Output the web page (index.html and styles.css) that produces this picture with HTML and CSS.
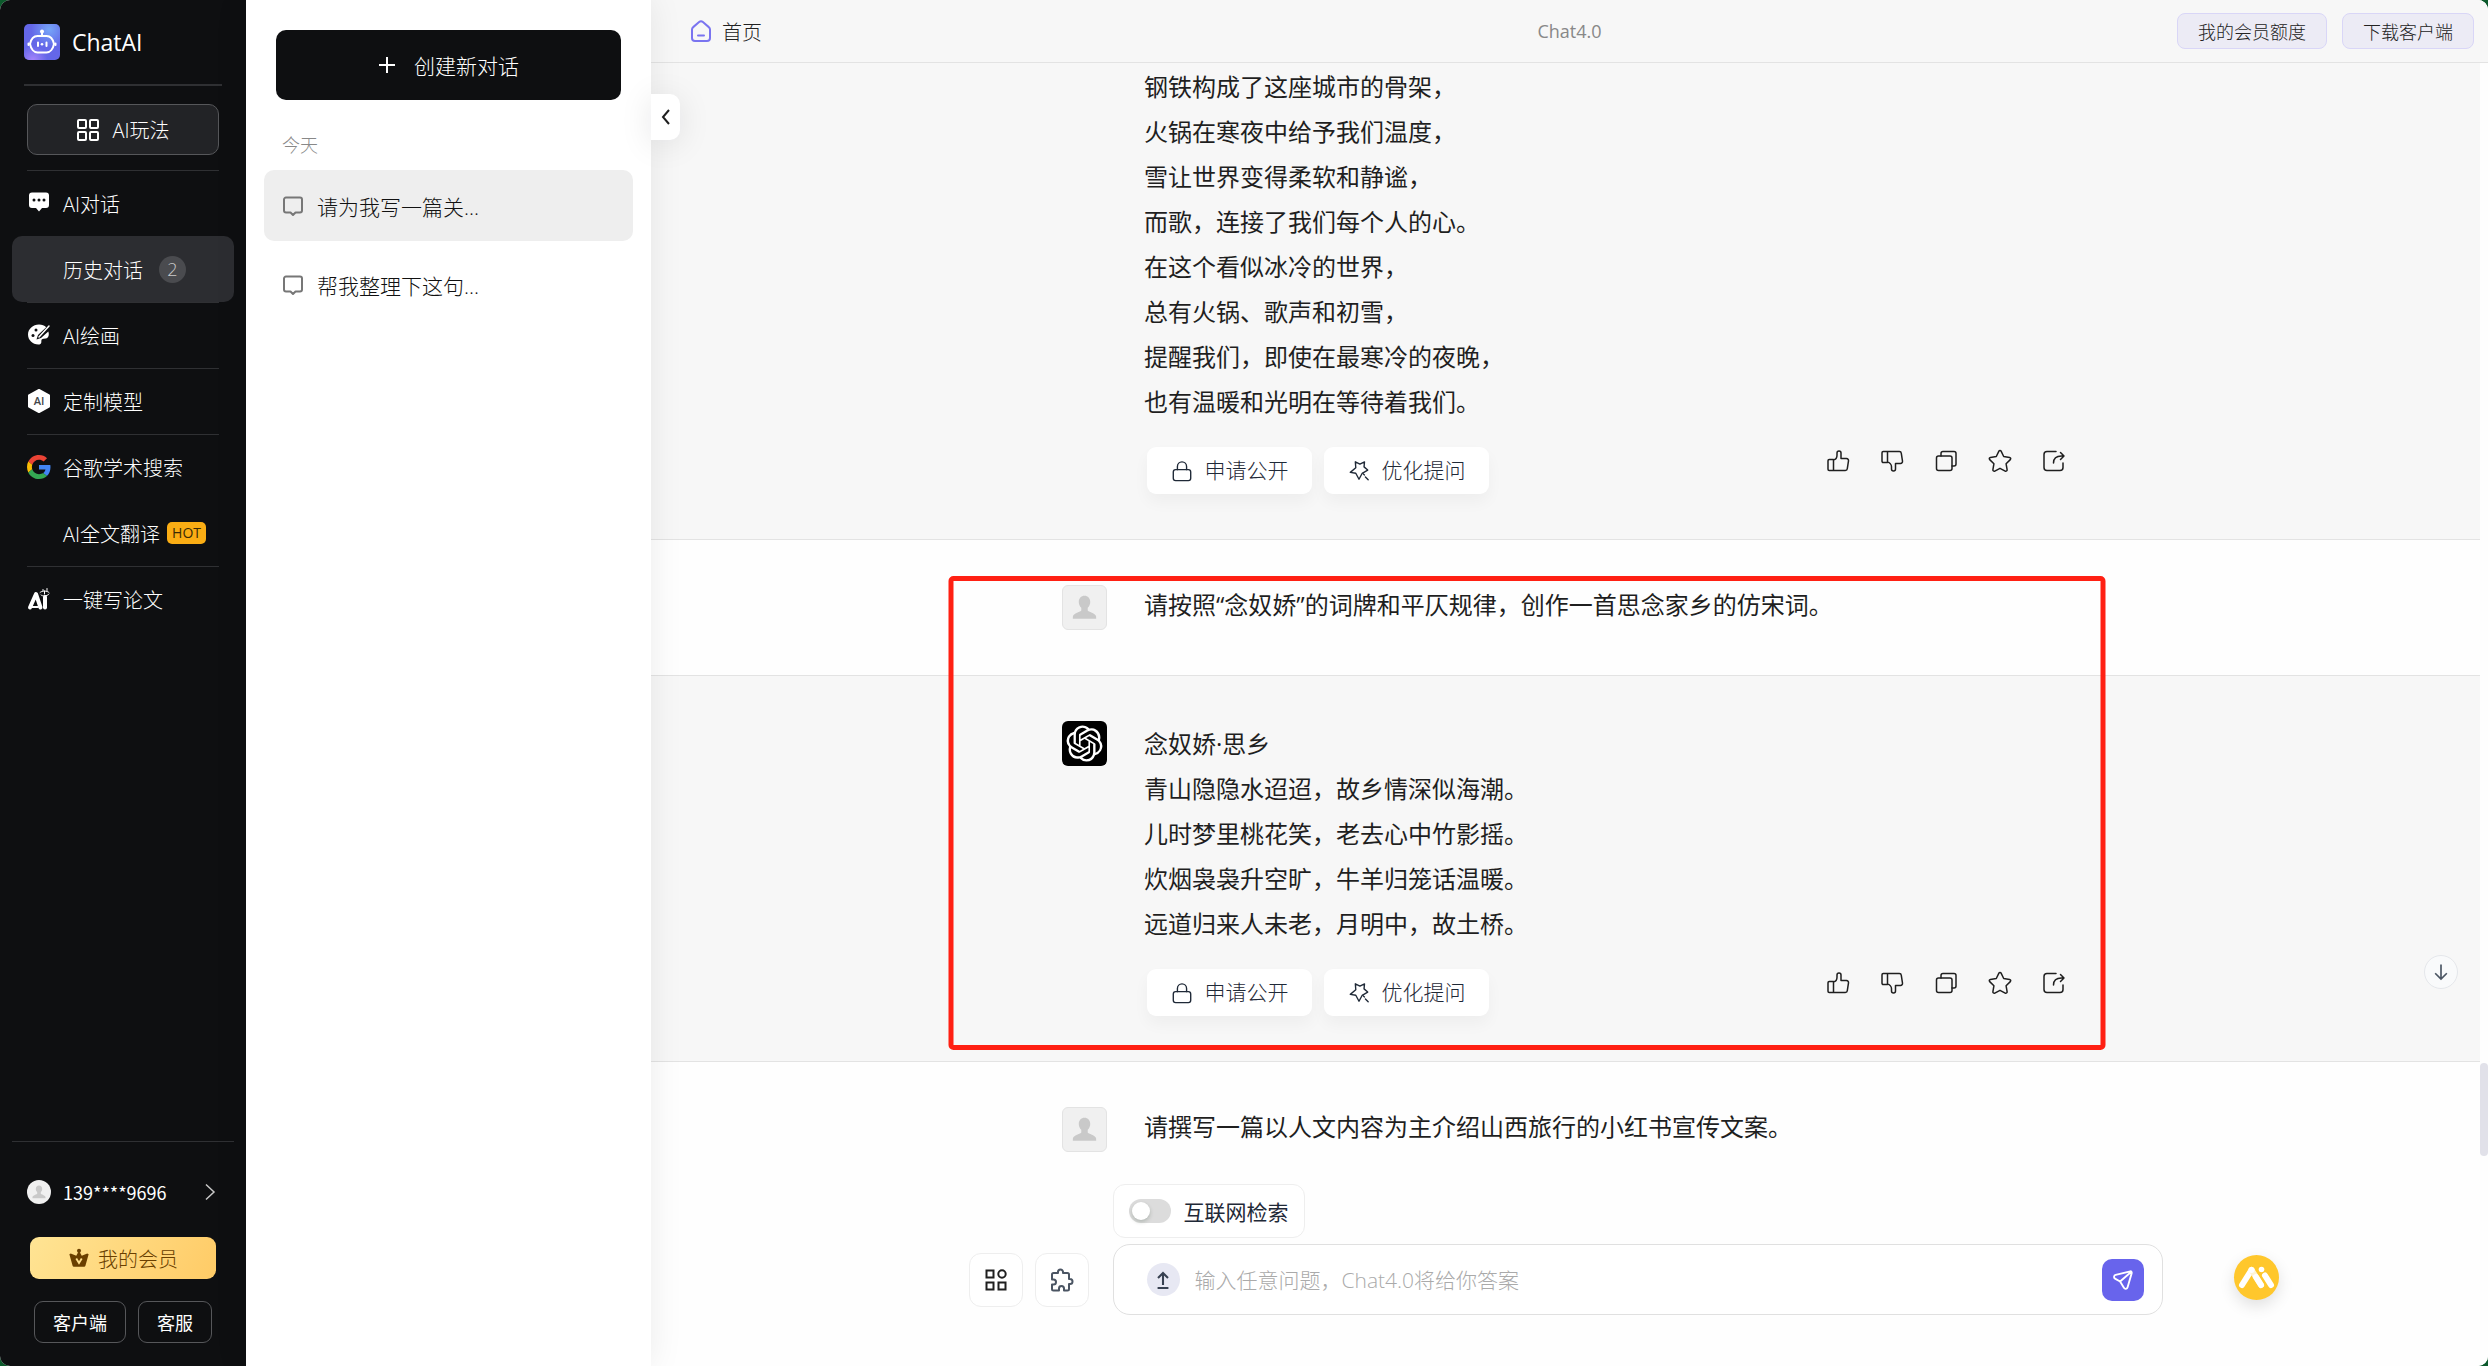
FILE: index.html
```html
<!DOCTYPE html>
<html lang="zh-CN">
<head>
    <meta charset="UTF-8">
    <meta name="viewport" content="width=device-width, initial-scale=1.0">
    <title>ChatAI</title>
    <link rel="stylesheet" href="styles.css">
</head>
<body>
    <!-- Shared icons -->
    <svg class="sprite" aria-hidden="true">
        <symbol id="icon-user" viewBox="0 0 24 24">
            <path fill="#c9c9c9" d="M12 5.500c1.900 0 3.200 1.500 3.200 3.400 0 1.400-.6 2.500-1.400 3.200v1.600c0 .6 4.700 1.500 4.700 3.500v1.100h-13v-1.100c0-2 4.700-2.900 4.700-3.500v-1.600c-.8-.7-1.400-1.800-1.400-3.200 0-1.900 1.300-3.400 3.200-3.400z"/>
        </symbol>
        <symbol id="icon-message" viewBox="0 0 24 24">
            <path d="M5 3.500h14a2 2 0 0 1 2 2v11a2 2 0 0 1-2 2h-4.500L12 21l-2.500-2.500H5a2 2 0 0 1-2-2v-11a2 2 0 0 1 2-2z"/>
        </symbol>
        <symbol id="icon-lock" viewBox="0 0 24 24">
            <rect x="2.500" y="10.500" width="19" height="12" rx="2.500"/>
            <path d="M7 10.500V7a5 5 0 0 1 10 0v3.500"/>
        </symbol>
        <symbol id="icon-magic" viewBox="0 0 24 24">
            <path d="M15.500 14.500l6-3.500-4-3.500L18 2l-5 2.500L8 2l.5 6.500-6 5 6 1 3.500 6.500 3.500-6.500M17 15.500l1 .8M19 18.500l3 3"/>
        </symbol>
        <symbol id="icon-up" viewBox="0 0 24 24">
            <path d="M7.500 10.500v11H3.200A1.200 1.200 0 0 1 2 20.300v-8.600a1.200 1.200 0 0 1 1.200-1.200zM7.500 11c2-.5 3.500-2.600 3.500-4.800V4a2 2 0 0 1 4 0v5.500h5.500a2 2 0 0 1 2 2.300l-1.200 7.900a2 2 0 0 1-2 1.800H7.500"/>
        </symbol>
        <symbol id="icon-down" viewBox="0 0 24 24">
            <path d="M7.500 13.500v-11H3.200A1.200 1.200 0 0 0 2 3.700v8.600a1.200 1.200 0 0 0 1.200 1.200zM7.500 13c2 .5 4 2.600 4 4.800V20a2 2 0 0 0 4 0v-5.500h5a2 2 0 0 0 2-2.300l-1.200-7.900a2 2 0 0 0-2-1.800H7.500"/>
        </symbol>
        <symbol id="icon-copy" viewBox="0 0 24 24">
            <rect x="2.500" y="7" width="15.500" height="14.500" rx="2"/>
            <path d="M7 7V4.500a2 2 0 0 1 2-2h11a2 2 0 0 1 2 2V15a2 2 0 0 1-2 2h-2"/>
        </symbol>
        <symbol id="icon-star" viewBox="0 0 24 24">
            <path d="M12 1.500c.5 0 .9.300 1.100.7l2.600 5.300 5.900.9c1.100.2 1.500 1.400.7 2.200l-4.200 4.200 1 5.900c.2 1.100-1 1.900-1.900 1.400L12 19.300l-5.200 2.800c-.9.500-2.100-.3-1.900-1.400l1-5.900-4.200-4.200c-.8-.8-.4-2 .7-2.200l5.900-.9 2.600-5.300c.2-.4.600-.7 1.100-.7z"/>
        </symbol>
        <symbol id="icon-share" viewBox="0 0 24 24">
            <path d="M14 2.500H5a3 3 0 0 0-3 3v13a3 3 0 0 0 3 3h13a3 3 0 0 0 3-3V14M11.500 14c0-4.500 3-7 8-7h2.500M18.500 3.500L22 7l-3.500 3.500"/>
        </symbol>
    </svg>

    <div class="app">
        <aside class="sidebar">
            <div class="brand">
                <svg class="brand-logo" viewBox="0 0 36 36">
                    <defs>
                        <radialGradient id="logoTop" cx=".7" cy=".15" r=".5">
                            <stop offset="0" stop-color="#76a6f8"/>
                            <stop offset="1" stop-color="#76a6f8" stop-opacity="0"/>
                        </radialGradient>
                        <radialGradient id="logoBottom" cx=".25" cy="1" r=".4">
                            <stop offset="0" stop-color="#a584fb"/>
                            <stop offset="1" stop-color="#a584fb" stop-opacity="0"/>
                        </radialGradient>
                    </defs>
                    <rect width="36" height="36" rx="5" fill="#6467e8"/>
                    <rect width="36" height="36" rx="5" fill="url(#logoTop)"/>
                    <rect width="36" height="36" rx="5" fill="url(#logoBottom)"/>
                    <g fill="none" stroke="#fff" stroke-width="2" stroke-linecap="round" stroke-linejoin="round">
                        <path d="M18 12V8M13.500 12h9c3.500 0 6.500 3.200 7.500 8-1 5-4 8.500-7.500 8.500h-9C10 28.500 7 25 6 20c1-4.800 4-8 7.500-8z"/>
                        <path d="M4.500 19.500v1.500M31.500 19.500v1.500M14 18.500v3.500M22.500 18.500v3.500"/>
                    </g>
                    <circle cx="18" cy="20.300" r="1.300" fill="#fff"/>
                    <circle cx="18" cy="7.500" r="2" fill="#fff"/>
                </svg>
                <span class="brand-name">ChatAI</span>
            </div>

            <button class="play-button">
                <svg class="icon" viewBox="0 0 24 24">
                    <rect x="2" y="2" width="8" height="8" rx="1"/>
                    <rect x="14" y="2" width="8" height="8" rx="1"/>
                    <rect x="2" y="14" width="8" height="8" rx="1"/>
                    <rect x="14" y="14" width="8" height="8" rx="1"/>
                </svg>
                AI玩法
            </button>

            <nav class="menu">
                <div class="menu-group">
                    <a class="menu-item" href="#">
                        <svg viewBox="0 0 24 24">
                            <path fill="#fff" d="M5 1.500h14a3 3 0 0 1 3 3V14a3 3 0 0 1-3 3h-4l-3 3.500L9 17H5a3 3 0 0 1-3-3V4.500a3 3 0 0 1 3-3z"/>
                            <g fill="#0e0f11"><circle cx="7" cy="9" r="1.500"/><circle cx="12" cy="9" r="1.500"/><circle cx="17" cy="9" r="1.500"/></g>
                        </svg>
                        AI对话
                    </a>
                    <a class="menu-item sub active" href="#">历史对话 <span class="count">2</span></a>
                </div>
                <div class="menu-group">
                    <a class="menu-item" href="#">
                        <svg viewBox="0 0 24 24">
                            <path fill="#fff" d="M12 1.500c3 0 5.500 1 7.200 2.800L11 12l-1.500 4.500L14 15l7.300-6.500c.6 1.700.7 3 .2 4.500-1 3-4 2.500-6 3-1.500.4-1 2-1.200 3.500-.3 1.500-1.300 2-2.800 2C5.500 21.500 1 17 1 11.500S6 1.500 12 1.500z"/>
                            <path stroke="#fff" stroke-width="1.500" stroke-linecap="round" d="M12 14l10-11"/>
                            <g fill="#0e0f11"><circle cx="9" cy="7" r="1.500"/><circle cx="6" cy="12.500" r="1.500"/></g>
                        </svg>
                        AI绘画
                    </a>
                </div>
                <div class="menu-group">
                    <a class="menu-item" href="#">
                        <svg viewBox="0 0 24 24">
                            <path fill="#fff" stroke="#fff" stroke-linejoin="round" stroke-width="2" d="M12 1l10 5.500v11L12 23 2 17.500v-11z"/>
                            <text class="hex-text" x="12" y="16" text-anchor="middle">AI</text>
                        </svg>
                        定制模型
                    </a>
                </div>
                <div class="menu-group">
                    <a class="menu-item" href="#">
                        <svg viewBox="0 0 48 48">
                            <path fill="#EA4335" d="M24 9.500c3.540 0 6.710 1.220 9.210 3.600l6.850-6.850C35.900 2.380 30.470 0 24 0 14.620 0 6.510 5.380 2.560 13.220l7.980 6.190C12.430 13.720 17.740 9.500 24 9.500z"/>
                            <path fill="#4285F4" d="M46.980 24.550c0-1.570-.15-3.090-.38-4.550H24v9.020h12.940c-.58 2.960-2.260 5.480-4.780 7.180l7.730 6c4.510-4.180 7.090-10.360 7.090-17.650z"/>
                            <path fill="#FBBC05" d="M10.530 28.590c-.48-1.450-.76-2.990-.76-4.590s.27-3.140.76-4.590l-7.980-6.190C.92 16.460 0 20.120 0 24c0 3.880.92 7.540 2.560 10.780l7.970-6.190z"/>
                            <path fill="#34A853" d="M24 48c6.480 0 11.930-2.130 15.890-5.810l-7.730-6c-2.150 1.450-4.920 2.300-8.160 2.300-6.260 0-11.570-4.220-13.470-9.910l-7.980 6.190C6.510 42.620 14.620 48 24 48z"/>
                        </svg>
                        谷歌学术搜索
                    </a>
                    <a class="menu-item sub" href="#">AI全文翻译 <span class="hot">HOT</span></a>
                </div>
                <div class="menu-group">
                    <a class="menu-item" href="#">
                        <svg viewBox="0 0 24 24" fill="none" stroke="#fff" stroke-linecap="round" stroke-linejoin="round">
                            <path stroke-width="4" d="M3 20.500L9 7l4.500 13.500"/>
                            <path stroke-width="2" d="M3 20h8"/>
                            <path stroke-width="4" d="M18 10v10.500"/>
                            <path stroke-width="1" d="M13 5.500c2-2 7-2 9 0M14 8c1.500 1.500 6 1.500 8-1M16 2.500v1M20 1.500v2M17.500 4v3"/>
                        </svg>
                        一键写论文
                    </a>
                </div>
            </nav>

            <div class="account">
                <a class="account-user" href="#">
                    <svg class="account-avatar" viewBox="0 0 24 24"><use href="#icon-user"/></svg>
                    <span>139****9696</span>
                    <svg class="account-arrow" viewBox="0 0 12 18"><path d="M2 1.500l8 7.500-8 7.500"/></svg>
                </a>
                <button class="vip-button">
                    <svg viewBox="0 0 24 24">
                        <circle cx="12" cy="4" r="2.200" fill="#6a3f00"/>
                        <path fill="#6a3f00" d="M12 4l3 5.500 6-2.500 1.500 1L19 20.500a1.500 1.500 0 0 1-1.500 1h-11a1.500 1.500 0 0 1-1.500-1L1.500 8 3 7l6 2.500z"/>
                        <path fill="none" stroke="#ffdf8c" stroke-width="2" d="M9 12.500l3 5 3-5"/>
                    </svg>
                    我的会员
                </button>
                <div class="account-links">
                    <button>客户端</button>
                    <button>客服</button>
                </div>
            </div>
        </aside>

        <section class="history">
            <button class="new-chat">
                <svg viewBox="0 0 18 18"><path d="M9 1v16M1 9h16"/></svg>
                创建新对话
            </button>
            <h2 class="history-date">今天</h2>
            <a class="history-item active" href="#">
                <svg class="icon"><use href="#icon-message"/></svg>
                请为我写一篇关...
            </a>
            <a class="history-item" href="#">
                <svg class="icon"><use href="#icon-message"/></svg>
                帮我整理下这句...
            </a>
        </section>

        <main class="main">
            <header class="topbar">
                <a class="home" href="#">
                    <svg viewBox="0 0 22 22"><path d="M2 9.500c0-1 .4-1.800 1.200-2.400l5.900-5c1.100-.9 2.700-.9 3.800 0l5.900 5c.8.600 1.200 1.400 1.200 2.400V18a3 3 0 0 1-3 3H5a3 3 0 0 1-3-3zM8 15.500h6"/></svg>
                    首页
                </a>
                <h1 class="model">Chat4.0</h1>
                <div class="topbar-actions">
                    <button>我的会员额度</button>
                    <button>下载客户端</button>
                </div>
            </header>

            <button class="collapse" aria-label="收起">
                <svg viewBox="0 0 12 18"><path d="M9 2L3 9l6 7"/></svg>
            </button>

            <div class="chat">
                <article class="message bot continued">
                    <div class="message-inner">
                        <span class="avatar-space"></span>
                        <div class="message-body">
                            <p>钢铁构成了这座城市的骨架，<br>火锅在寒夜中给予我们温度，<br>雪让世界变得柔软和静谧，<br>而歌，连接了我们每个人的心。<br>在这个看似冰冷的世界，<br>总有火锅、歌声和初雪，<br>提醒我们，即使在最寒冷的夜晚，<br>也有温暖和光明在等待着我们。</p>
                            <div class="actions">
                                <button class="pill"><svg class="icon"><use href="#icon-lock"/></svg>申请公开</button>
                                <button class="pill"><svg class="icon"><use href="#icon-magic"/></svg>优化提问</button>
                                <div class="tools">
                                    <button aria-label="赞"><svg class="icon"><use href="#icon-up"/></svg></button>
                                    <button aria-label="踩"><svg class="icon"><use href="#icon-down"/></svg></button>
                                    <button aria-label="复制"><svg class="icon"><use href="#icon-copy"/></svg></button>
                                    <button aria-label="收藏"><svg class="icon"><use href="#icon-star"/></svg></button>
                                    <button aria-label="分享"><svg class="icon"><use href="#icon-share"/></svg></button>
                                </div>
                            </div>
                        </div>
                    </div>
                </article>

                <div class="marked">
                    <article class="message user">
                        <div class="message-inner">
                            <svg class="avatar" viewBox="0 0 24 24"><use href="#icon-user"/></svg>
                            <div class="message-body">
                                <p>请按照“念奴娇”的词牌和平仄规律，创作一首思念家乡的仿宋词。</p>
                            </div>
                        </div>
                    </article>
                    <article class="message bot">
                        <div class="message-inner">
                            <svg class="avatar dark" viewBox="-3 -3 30 30">
                                <path fill="#fff" d="M22.2819 9.8211a5.9847 5.9847 0 0 0-.5157-4.9108 6.0462 6.0462 0 0 0-6.5098-2.9A6.0651 6.0651 0 0 0 4.9807 4.1818a5.9847 5.9847 0 0 0-3.9977 2.9 6.0462 6.0462 0 0 0 .7427 7.0966 5.98 5.98 0 0 0 .511 4.9107 6.051 6.051 0 0 0 6.5146 2.9001A5.9847 5.9847 0 0 0 13.2599 24a6.0557 6.0557 0 0 0 5.7718-4.2058 5.9894 5.9894 0 0 0 3.9977-2.9001 6.0557 6.0557 0 0 0-.7475-7.0729zm-9.022 12.6081a4.4755 4.4755 0 0 1-2.8764-1.0408l.1419-.0804 4.7783-2.7582a.7948.7948 0 0 0 .3927-.6813v-6.7369l2.02 1.1686a.071.071 0 0 1 .038.052v5.5826a4.504 4.504 0 0 1-4.4945 4.4944zm-9.6607-4.1254a4.4708 4.4708 0 0 1-.5346-3.0137l.142.0852 4.783 2.7582a.7712.7712 0 0 0 .7806 0l5.8428-3.3685v2.3324a.0804.0804 0 0 1-.0332.0615L9.74 19.9502a4.4992 4.4992 0 0 1-6.1408-1.6464zM2.3408 7.8956a4.485 4.485 0 0 1 2.3655-1.9728V11.6a.7664.7664 0 0 0 .3879.6765l5.8144 3.3543-2.0201 1.1685a.0757.0757 0 0 1-.071 0l-4.8303-2.7865A4.504 4.504 0 0 1 2.3408 7.872zm16.5963 3.8558L13.1038 8.364 15.1192 7.2a.0757.0757 0 0 1 .071 0l4.8303 2.7913a4.4944 4.4944 0 0 1-.6765 8.1042v-5.6772a.79.79 0 0 0-.407-.667zm2.0107-3.0231l-.142-.0852-4.7735-2.7818a.7759.7759 0 0 0-.7854 0L9.409 9.2297V6.8974a.0662.0662 0 0 1 .0284-.0615l4.8303-2.7866a4.4992 4.4992 0 0 1 6.6802 4.66zM8.3065 12.863l-2.02-1.1638a.0804.0804 0 0 1-.038-.0567V6.0742a4.4992 4.4992 0 0 1 7.3757-3.4537l-.142.0805L8.704 5.459a.7948.7948 0 0 0-.3927.6813zm1.0976-2.3654l2.602-1.4998 2.6069 1.4998v2.9994l-2.5974 1.4997-2.6067-1.4997Z"/>
                            </svg>
                            <div class="message-body">
                                <p>念奴娇·思乡<br>青山隐隐水迢迢，故乡情深似海潮。<br>儿时梦里桃花笑，老去心中竹影摇。<br>炊烟袅袅升空旷，牛羊归笼话温暖。<br>远道归来人未老，月明中，故土桥。</p>
                                <div class="actions">
                                    <button class="pill"><svg class="icon"><use href="#icon-lock"/></svg>申请公开</button>
                                    <button class="pill"><svg class="icon"><use href="#icon-magic"/></svg>优化提问</button>
                                    <div class="tools">
                                        <button aria-label="赞"><svg class="icon"><use href="#icon-up"/></svg></button>
                                        <button aria-label="踩"><svg class="icon"><use href="#icon-down"/></svg></button>
                                        <button aria-label="复制"><svg class="icon"><use href="#icon-copy"/></svg></button>
                                        <button aria-label="收藏"><svg class="icon"><use href="#icon-star"/></svg></button>
                                        <button aria-label="分享"><svg class="icon"><use href="#icon-share"/></svg></button>
                                    </div>
                                </div>
                            </div>
                        </div>
                    </article>
                    <div class="marked-frame"></div>
                </div>

                <article class="message user">
                    <div class="message-inner">
                        <svg class="avatar" viewBox="0 0 24 24"><use href="#icon-user"/></svg>
                        <div class="message-body">
                            <p>请撰写一篇以人文内容为主介绍山西旅行的小红书宣传文案。</p>
                        </div>
                    </div>
                </article>
                <div class="scroll-thumb"></div>
            </div>

            <form class="composer" onsubmit="return false">
                <div class="composer-tools">
                    <button type="button" aria-label="应用">
                        <svg viewBox="0 0 24 24" stroke="#1f1f1f">
                            <rect x="2.500" y="2.500" width="7" height="7"/>
                            <circle cx="18" cy="6" r="3.700"/>
                            <rect x="2.500" y="14.500" width="7" height="7"/>
                            <rect x="14.500" y="14.500" width="7" height="7"/>
                        </svg>
                    </button>
                    <button type="button" aria-label="插件">
                        <svg viewBox="0 0 24 24" stroke="#4b5563" stroke-linejoin="round">
                            <path d="M8 5V4a2.500 2.500 0 0 1 5 0v1h4.500a1.500 1.500 0 0 1 1.500 1.500V11h1a2.500 2.500 0 0 1 0 5h-1v5a1.500 1.500 0 0 1-1.500 1.500H14v-2a2.500 2.500 0 0 0-5 0v2H3.500A1.500 1.500 0 0 1 2 21v-4.500h1.500a2.500 2.500 0 0 0 0-5H2v-5A1.500 1.500 0 0 1 3.500 5z"/>
                        </svg>
                    </button>
                </div>
                <div class="composer-main">
                    <label class="web-search">
                        <input type="checkbox">
                        互联网检索
                    </label>
                    <div class="input-box">
                        <button type="button" class="upload" aria-label="上传">
                            <svg viewBox="0 0 24 24"><path d="M12 18V4M6 9.500L12 3.500l6 6M5.500 21.500h13"/></svg>
                        </button>
                        <input type="text" aria-label="输入问题" placeholder="输入任意问题，Chat4.0将给你答案">
                        <button class="send" aria-label="发送">
                            <svg viewBox="0 0 24 24"><path d="M20 2.500L4 6.500c-2 .5-2.500 3-.7 4l5.500 3.200 4.200 6.800c1 1.700 3.500 1.400 4-.5l4.500-15.500c.3-1.200-.5-2.200-1.500-2zM8.800 13.700L20.500 3.500"/></svg>
                        </button>
                    </div>
                </div>
            </form>

            <button class="to-bottom" aria-label="回到底部">
                <svg viewBox="0 0 24 24"><path d="M12 3v17M5 13.500l7 7 7-7"/></svg>
            </button>
            <button class="helper" aria-label="AI助手">
                <svg viewBox="0 0 45 45">
                    <g fill="none" stroke="#fff" stroke-width="6" stroke-linecap="round">
                        <path d="M8 30l9.500-15M37 30l-6-9.500"/>
                        <path stroke="#fff4d6" d="M17.500 15L27 30"/>
                        <path d="M22 22l5 8"/>
                        <path d="M17.500 15h0"/>
                    </g>
                    <circle cx="27.500" cy="14.500" r="2.800" fill="#fff"/>
                </svg>
            </button>
        </main>
    </div>
</body>
</html>
```
FILE: styles.css
```css
* {
    margin: 0;
    padding: 0;
    box-sizing: border-box;
}

body {
    font-family: 'Open Sans', 'Noto Sans CJK SC', sans-serif;
    font-size: 21px;
    color: #1f1f1f;
    background: #0c5a2c;
}

button,
input {
    font: inherit;
    color: inherit;
    border: none;
    background: none;
}

button {
    display: flex;
    align-items: center;
    justify-content: center;
    cursor: pointer;
}

a {
    color: inherit;
    text-decoration: none;
}

svg {
    flex: none;
}

.sprite {
    position: absolute;
    width: 0;
    height: 0;
}

.icon {
    width: 24px;
    height: 24px;
    fill: none;
    stroke: currentColor;
    stroke-width: 1.5;
    stroke-linejoin: round;
    stroke-linecap: round;
}

.app {
    display: flex;
    height: 100vh;
    border-radius: 10px;
    overflow: hidden;
    background: #fff;
}

/* Sidebar */
.sidebar {
    width: 246px;
    flex: none;
    display: flex;
    flex-direction: column;
    background: #0e0f11;
    color: #fff;
    font-size: 20px;
    font-weight: 300;
}

.brand {
    display: flex;
    align-items: center;
    gap: 12px;
    height: 86px;
    margin: 0 24px;
    border-bottom: 2px solid #2f3033;
}

.brand-logo {
    width: 36px;
    height: 36px;
}

.brand-name {
    font-size: 23px;
    font-weight: 400;
}

.play-button {
    gap: 12px;
    height: 51px;
    margin: 18px 27px 15px;
    border: 1px solid #56575a;
    border-radius: 10px;
    background: #222326;
}

.play-button .icon {
    stroke-width: 2;
}

.menu-group {
    margin: 0 27px;
    box-shadow: inset 0 1px 0 #2f3033;
}

.menu-item {
    display: flex;
    align-items: center;
    gap: 12px;
    height: 66px;
    white-space: nowrap;
}

.menu-item svg {
    width: 24px;
    height: 24px;
}

.menu-item.sub {
    margin: 0 -15px;
    padding-left: 51px;
}

.menu-item.active {
    background: #2c2d31;
    border-radius: 10px;
}

.hex-text {
    font-size: 11px;
    font-weight: 600;
    fill: #44464a;
}

.count {
    width: 27px;
    margin-left: 4px;
    border-radius: 50%;
    background: #4a4b4f;
    color: #ccc;
    font-size: 18px;
    line-height: 27px;
    text-align: center;
}

.hot {
    margin-left: -5px;
    padding: 0 5px;
    border-radius: 5px;
    background: #faad14;
    color: #3a2a05;
    font-size: 14px;
    font-weight: 400;
    line-height: 22px;
}

.account {
    margin: auto 12px 0;
    padding: 0 15px 23px;
    border-top: 1px solid #2f3033;
}

.account-user {
    display: flex;
    align-items: center;
    gap: 12px;
    height: 95px;
    padding: 4px 3px 0 0;
    font-family: 'Noto Sans CJK SC', sans-serif;
    font-size: 18px;
    font-weight: 400;
}

.account-avatar {
    width: 24px;
    height: 24px;
    border-radius: 50%;
    background: #f0f0f0;
}

.account-arrow {
    width: 12px;
    height: 18px;
    margin-left: auto;
    fill: none;
    stroke: #c8c8c8;
    stroke-width: 1.5;
}

.vip-button {
    gap: 8px;
    width: 186px;
    height: 42px;
    margin: 0 auto;
    border-radius: 9px;
    background: linear-gradient(120deg, #ffe494, #ffcb66);
    color: #6a3f00;
}

.vip-button svg {
    width: 22px;
    height: 22px;
}

.account-links {
    display: flex;
    justify-content: center;
    gap: 12px;
    margin-top: 22px;
}

.account-links button {
    height: 42px;
    padding: 0 18px;
    border: 1px solid #56575a;
    border-radius: 9px;
    font-size: 18px;
    font-weight: 400;
}

/* Conversation list */
.history {
    width: 405px;
    flex: none;
    padding: 30px 18px;
    background: #fff;
    box-shadow: 0 0 32px rgba(0, 0, 0, 0.08);
    z-index: 1;
}

.new-chat {
    gap: 18px;
    width: 345px;
    height: 70px;
    margin: 0 auto;
    border-radius: 10px;
    background: #0e0f11;
    color: #fff;
    font-weight: 300;
}

.new-chat svg {
    width: 18px;
    height: 18px;
    stroke: #fff;
    stroke-width: 2;
}

.history-date {
    padding: 0 18px;
    color: #888;
    font-size: 18px;
    font-weight: 300;
    line-height: 24px;
    margin: 33px 0 13px;
}

.history-item {
    display: flex;
    align-items: center;
    gap: 12px;
    height: 71px;
    margin-bottom: 8px;
    padding: 0 17px;
    border-radius: 10px;
    color: #111;
    font-weight: 300;
}

.history-item.active {
    background: #eee;
}

.history-item .icon {
    color: #777;
    stroke-width: 2;
}

/* Main column */
.main {
    position: relative;
    flex: 1;
    min-width: 0;
    display: flex;
    flex-direction: column;
    background: #fefefe;
}

.topbar {
    display: grid;
    grid-template-columns: 1fr auto 1fr;
    align-items: center;
    height: 63px;
    padding: 0 14px;
    border-bottom: 1px solid #e3e3e3;
    background: #f7f7f7;
}

.home {
    display: flex;
    align-items: center;
    gap: 10px;
    padding-left: 25px;
    color: #222;
    font-size: 20px;
    font-weight: 300;
}

.home svg {
    width: 22px;
    height: 22px;
    fill: none;
    stroke: #7a74f0;
    stroke-width: 2;
    stroke-linecap: round;
}

.model {
    color: #888;
    font-size: 18px;
    font-weight: 400;
}

.topbar-actions {
    display: flex;
    justify-content: flex-end;
    gap: 15px;
}

.topbar-actions button {
    height: 36px;
    padding: 0 20px;
    border: 1px solid #d9d6f7;
    border-radius: 8px;
    background: #ecebf5;
    color: #222;
    font-size: 18px;
    font-weight: 300;
}

.collapse {
    position: absolute;
    top: 94px;
    left: 0;
    z-index: 2;
    width: 29px;
    height: 46px;
    border-radius: 0 10px 10px 0;
    background: #fff;
    box-shadow: 0 4px 32px rgba(0, 0, 30, 0.1);
}

.collapse svg {
    width: 12px;
    height: 18px;
    fill: none;
    stroke: #1f1f1f;
    stroke-width: 2;
}

.chat {
    position: relative;
    flex: 1;
    min-height: 0;
    padding-right: 8px;
    overflow: hidden;
}

.message {
    padding: 45px 24px;
    border-bottom: 1px solid #e3e3e3;
}

.message.bot {
    background: #f7f7f7;
}

.message.continued {
    padding-top: 1px;
}

.message-inner {
    display: flex;
    align-items: flex-start;
    gap: 37px;
    max-width: 1007px;
    margin: 0 auto;
}

.avatar {
    width: 45px;
    height: 45px;
    border: 1px solid #e3e3e3;
    border-radius: 6px;
    background: #f0f0f0;
}

.avatar.dark {
    border: none;
    background: #000;
}

.avatar-space {
    flex: none;
    width: 45px;
}

.message-body {
    flex: 1;
    font-size: 24px;
    line-height: 45px;
}

.message.user p {
    line-height: 40px;
}

.actions {
    display: flex;
    align-items: flex-start;
    gap: 12px;
    margin-top: 23px;
    padding: 0 3px;
}

.pill {
    gap: 12px;
    width: 165px;
    height: 47px;
    border-radius: 9px;
    background: #fff;
    box-shadow: 0 8px 16px rgba(0, 0, 0, 0.04);
    color: #1f2937;
    font-size: 21px;
    font-weight: 300;
}

.pill .icon {
    width: 22px;
    height: 22px;
}

.tools {
    display: flex;
    gap: 30px;
    margin-left: auto;
}

.tools button {
    height: 28px;
}

.marked {
    position: relative;
}

/* Red frame drawn over the marked exchange */
.marked-frame {
    position: absolute;
    top: 36px;
    bottom: 12px;
    left: 50%;
    width: 1157px;
    transform: translateX(-50%);
    margin-left: -39px;
    border: 5px solid #ff2013;
    border-radius: 5px;
    pointer-events: none;
}

.chat > .user {
    border-bottom: none;
}

.scroll-thumb {
    position: absolute;
    right: 0;
    bottom: 17px;
    width: 8px;
    height: 93px;
    border-radius: 4px;
    background: #e1e1e9;
}

/* Composer */
.composer {
    display: flex;
    align-items: flex-end;
    justify-content: center;
    gap: 24px;
    padding: 11px 8px 51px 0;
}

.composer-tools {
    display: flex;
    gap: 12px;
    padding-bottom: 8px;
}

.composer-tools button {
    width: 54px;
    height: 54px;
    border: 1px solid #eee;
    border-radius: 12px;
    background: #fff;
}

.composer-tools svg {
    width: 24px;
    height: 24px;
    fill: none;
    stroke-width: 2;
}

.composer-main {
    flex: 0 1 1050px;
    display: flex;
    flex-direction: column;
    align-items: flex-start;
    gap: 6px;
}

.web-search {
    display: flex;
    align-items: center;
    gap: 13px;
    height: 54px;
    padding: 0 15px;
    border: 1px solid #eee;
    border-radius: 12px;
    background: #fff;
    color: #1f2937;
}

.web-search input {
    appearance: none;
    width: 42px;
    height: 24px;
    padding: 3px;
    border-radius: 12px;
    background: #dcdcdc;
}

.web-search input::before {
    content: '';
    display: block;
    width: 18px;
    height: 18px;
    border-radius: 50%;
    background: #fff;
    box-shadow: 0 2px 4px rgba(0, 35, 11, 0.2);
}

.web-search input:checked {
    background: #6864ec;
}

.web-search input:checked::before {
    margin-left: auto;
}

.input-box {
    display: flex;
    align-items: center;
    width: 100%;
    height: 71px;
    padding: 0 18px 0 33px;
    border: 1px solid #e0e0e0;
    border-radius: 17px;
    background: #fff;
}

.upload {
    flex: none;
    width: 33px;
    height: 33px;
    border-radius: 50%;
    background: #e7e8f3;
}

.upload svg {
    width: 20px;
    height: 20px;
    fill: none;
    stroke: #374151;
    stroke-width: 2.5;
}

.input-box input {
    flex: 1;
    min-width: 0;
    height: 48px;
    padding: 0 15px;
    outline: none;
    font-weight: 300;
}

.input-box input::placeholder {
    color: #aaa;
}

.send {
    flex: none;
    width: 42px;
    height: 42px;
    border-radius: 10px;
    background: #6864ec;
}

.send svg {
    width: 22px;
    height: 22px;
    fill: none;
    stroke: #fff;
    stroke-width: 2;
    stroke-linejoin: round;
}

.to-bottom {
    position: absolute;
    right: 30px;
    bottom: 377px;
    width: 34px;
    height: 34px;
    border: 1px solid #e5e7eb;
    border-radius: 50%;
    background: #f9fafb;
}

.to-bottom svg {
    width: 20px;
    height: 20px;
    fill: none;
    stroke: #4b5563;
    stroke-width: 2;
}

.helper {
    position: absolute;
    right: 209px;
    bottom: 66px;
    width: 45px;
    height: 45px;
    border-radius: 50%;
    background: #ffc72c;
    box-shadow: 0 6px 16px rgba(0, 0, 0, 0.12);
}

.helper svg {
    width: 45px;
    height: 45px;
}
```
